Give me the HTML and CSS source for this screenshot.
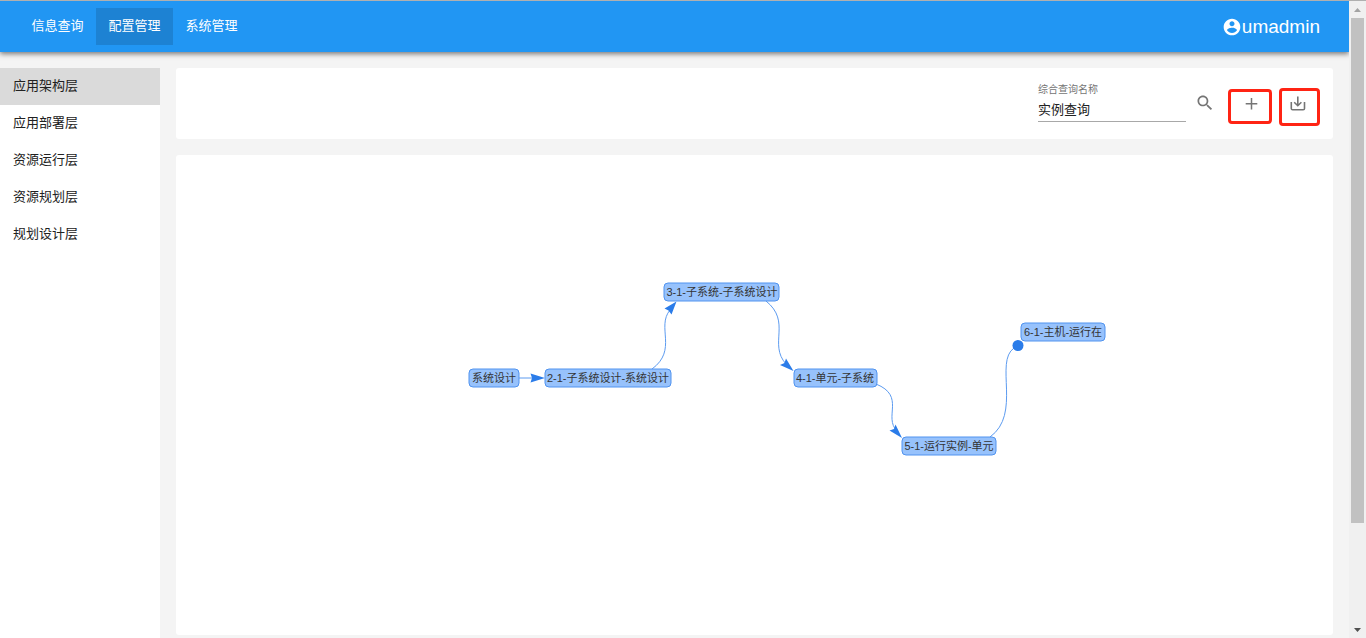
FILE: index.html
```html
<!DOCTYPE html>
<html lang="zh-CN">
<head>
<meta charset="utf-8">
<title>配置管理</title>
<link rel="stylesheet" href="styles.css">
</head>
<body>
<div class="window">
  <div class="page">
    <header class="topbar">
      <nav class="topnav">
        <a class="topnav-item" href="#">信息查询</a>
        <a class="topnav-item is-active" href="#">配置管理</a>
        <a class="topnav-item" href="#">系统管理</a>
      </nav>
      <a class="user" href="#">
        <svg class="user-icon" viewBox="0 0 24 24" aria-hidden="true"><path d="M12 2C6.48 2 2 6.48 2 12s4.48 10 10 10 10-4.48 10-10S17.520 2 12 2zm0 3c1.660 0 3 1.340 3 3s-1.340 3-3 3-3-1.340-3-3 1.340-3 3-3zm0 14.200c-2.500 0-4.710-1.280-6-3.220.03-1.990 4-3.080 6-3.080 1.990 0 5.970 1.090 6 3.080-1.290 1.940-3.500 3.220-6 3.220z"/></svg>
        <span>umadmin</span>
      </a>
    </header>
    <div class="body">
      <aside class="sidebar">
        <a class="side-item is-active" href="#">应用架构层</a>
        <a class="side-item" href="#">应用部署层</a>
        <a class="side-item" href="#">资源运行层</a>
        <a class="side-item" href="#">资源规划层</a>
        <a class="side-item" href="#">规划设计层</a>
      </aside>
      <main class="content">
        <form class="card toolbar">
          <div class="field">
            <label class="field-label" for="query-name">综合查询名称</label>
            <input class="field-input" id="query-name" type="text" value="实例查询">
          </div>
          <button class="tool search" type="button" aria-label="搜索">
            <svg viewBox="0 0 24 24" width="20" height="20"><path fill="currentColor" d="M15.500 14h-.79l-.28-.27C15.410 12.590 16 11.110 16 9.500 16 5.910 13.090 3 9.500 3S3 5.910 3 9.500 5.910 16 9.500 16c1.610 0 3.090-.59 4.230-1.570l.27.28v.79l5 4.990L20.490 19l-4.990-5zm-6 0C7.010 14 5 11.990 5 9.500S7.010 5 9.500 5 14 7.010 14 9.500 11.990 14 9.500 14z"/></svg>
          </button>
          <button class="tool marked add" type="button" aria-label="新增">
            <svg viewBox="0 0 16 16" width="16" height="16"><path fill="none" stroke="currentColor" stroke-width="1.500" d="M8.500 2v11.500M2.700 7.700h11.600"/></svg>
          </button>
          <button class="tool marked save" type="button" aria-label="导出">
            <svg viewBox="0 0 16 16" width="16" height="16"><path fill="none" stroke="currentColor" stroke-width="1.600" d="M7.800.5v9M4.200 6.200l3.600 3.500 3.600-3.500M1.300 6v6.500q0 1.300 1.300 1.300h10.600q1.300 0 1.300-1.300V6"/></svg>
          </button>
        </form>
        <section class="card graph-card">
          <svg class="graph" role="img" aria-label="查询关系图">
            <g transform="translate(-176 -155)">
              <g class="edges">
                <path d="M519 378H534"/>
                <path d="M652 369C678 350 656 327 670 310"/>
                <path d="M766 301C792 322 768 344 786 364"/>
                <path d="M876 384C906 396 883 417 897 431"/>
                <path d="M990 437C1022 414 994 362 1014 348"/>
              </g>
              <g class="heads">
                <path d="M545 378 530.500 373.500 532 378 530.500 382.500z"/>
                <path d="M676.500 301.500 664.500 308.500 668.500 310.500 671.500 314.500z"/>
                <path d="M793.500 371 786 358.500 784.500 363 780 365z"/>
                <path d="M902 438 895.500 424.500 894 429 889.500 430.500z"/>
                <circle cx="1018" cy="345.500" r="5.500"/>
              </g>
              <g class="nodes">
                <rect x="469" y="369" width="50" height="18" rx="4"/>
                <rect x="545" y="369" width="126" height="18" rx="4"/>
                <rect x="664" y="283" width="115" height="18" rx="4"/>
                <rect x="794" y="369" width="83" height="18" rx="4"/>
                <rect x="902" y="437" width="94" height="18" rx="4"/>
                <rect x="1021" y="323" width="84" height="18" rx="4"/>
              </g>
              <g class="labels">
                <text x="494" y="382">系统设计</text>
                <text x="608" y="382">2-1-子系统设计-系统设计</text>
                <text x="722" y="296">3-1-子系统-子系统设计</text>
                <text x="835" y="382">4-1-单元-子系统</text>
                <text x="949" y="450">5-1-运行实例-单元</text>
                <text x="1063" y="336">6-1-主机-运行在</text>
              </g>
            </g>
          </svg>
        </section>
      </main>
    </div>
  </div>
  <div class="scrollbar" aria-hidden="true">
    <svg class="arrow up" viewBox="0 0 7 4"><path d="M0 4 3.500 0 7 4z"/></svg>
    <div class="thumb"></div>
    <svg class="arrow down" viewBox="0 0 7 4"><path d="M0 0 3.500 4 7 0z"/></svg>
  </div>
</div>
</body>
</html>
```
FILE: styles.css
```css
* { box-sizing: border-box; }
body {
  margin: 0;
  font: 13px/20px "Liberation Sans", "Noto Sans CJK SC", sans-serif;
  color: #212121;
  background: #f4f4f4;
}
a { color: inherit; text-decoration: none; }
.window {
  display: flex;
  height: 100vh;
  border-top: 1px solid #b0b0b0;
  overflow: hidden;
}
.page { flex: 1; min-width: 0; display: flex; flex-direction: column; }

.topbar {
  display: flex;
  align-items: center;
  justify-content: space-between;
  flex: none;
  padding: 7px 29px 7px 19px;
  color: #fff;
  background: #2196f3;
  box-shadow: 0 2px 5px rgba(0, 0, 0, .5);
}
.topnav { display: flex; }
.topnav-item {
  min-width: 77px;
  padding: 8px 12px 9px;
  text-align: center;
}
.topnav-item.is-active { background: #1d82d3; }
.user { display: flex; align-items: center; font-size: 19px; }
.user-icon { width: 20px; height: 20px; fill: currentColor; }

.body { flex: 1; display: flex; gap: 16px; padding: 16px 16px 0 0; }
.sidebar { width: 160px; flex: none; background: #fff; }
.side-item { display: block; padding: 8px 13px 9px; }
.side-item.is-active { background: #dadada; }

.content {
  flex: 1;
  min-width: 0;
  display: flex;
  flex-direction: column;
  gap: 16px;
  padding-bottom: 3px;
}
.card { background: #fff; border-radius: 3px; }
.toolbar {
  display: flex;
  align-items: flex-start;
  justify-content: flex-end;
  padding: 14px 13px 13px;
}
.field { width: 148px; margin-right: 8px; }
.field-label {
  display: block;
  font-size: 10px;
  line-height: 16px;
  color: #757575;
}
.field-input {
  display: block;
  width: 100%;
  height: 24px;
  padding: 0 0 2px;
  border: 0;
  border-bottom: 1px solid #a8a8a8;
  outline: 0;
  font: inherit;
  color: inherit;
  background: none;
}
.tool {
  display: flex;
  align-items: center;
  justify-content: center;
  padding: 0;
  border: 0;
  color: #757575;
  background: none;
}
.search { width: 22px; height: 42px; margin-right: 12px; }
.marked { border: 3px solid #ff2414; border-radius: 4px; }
.add { width: 44px; height: 35px; margin: 7px 7px 0 0; padding: 0 0 6px 2px; }
.save { width: 41px; height: 38px; margin-top: 6px; padding: 0 4px 6px 0; }

.graph-card { flex: 1; display: flex; min-height: 0; }
.graph { width: 100%; height: 100%; }
.edges { fill: none; stroke: #5c9bf0; stroke-width: 1; }
.heads { fill: #2b7ce9; }
.nodes { fill: #97c2fc; stroke: #5093ef; stroke-width: 1; }
.labels { font-size: 11px; fill: #343434; text-anchor: middle; }

.scrollbar {
  flex: none;
  display: flex;
  flex-direction: column;
  align-items: center;
  width: 17px;
  padding: 7px 2px 6px;
  background: #f0f0f0;
}
.thumb { flex: none; width: 13px; height: 81%; background: #c1c1c1; }
.arrow { flex: none; width: 7px; height: 4px; }
.up { margin-bottom: 6px; fill: #a3a3a3; }
.down { margin-top: auto; fill: #505050; }
```
